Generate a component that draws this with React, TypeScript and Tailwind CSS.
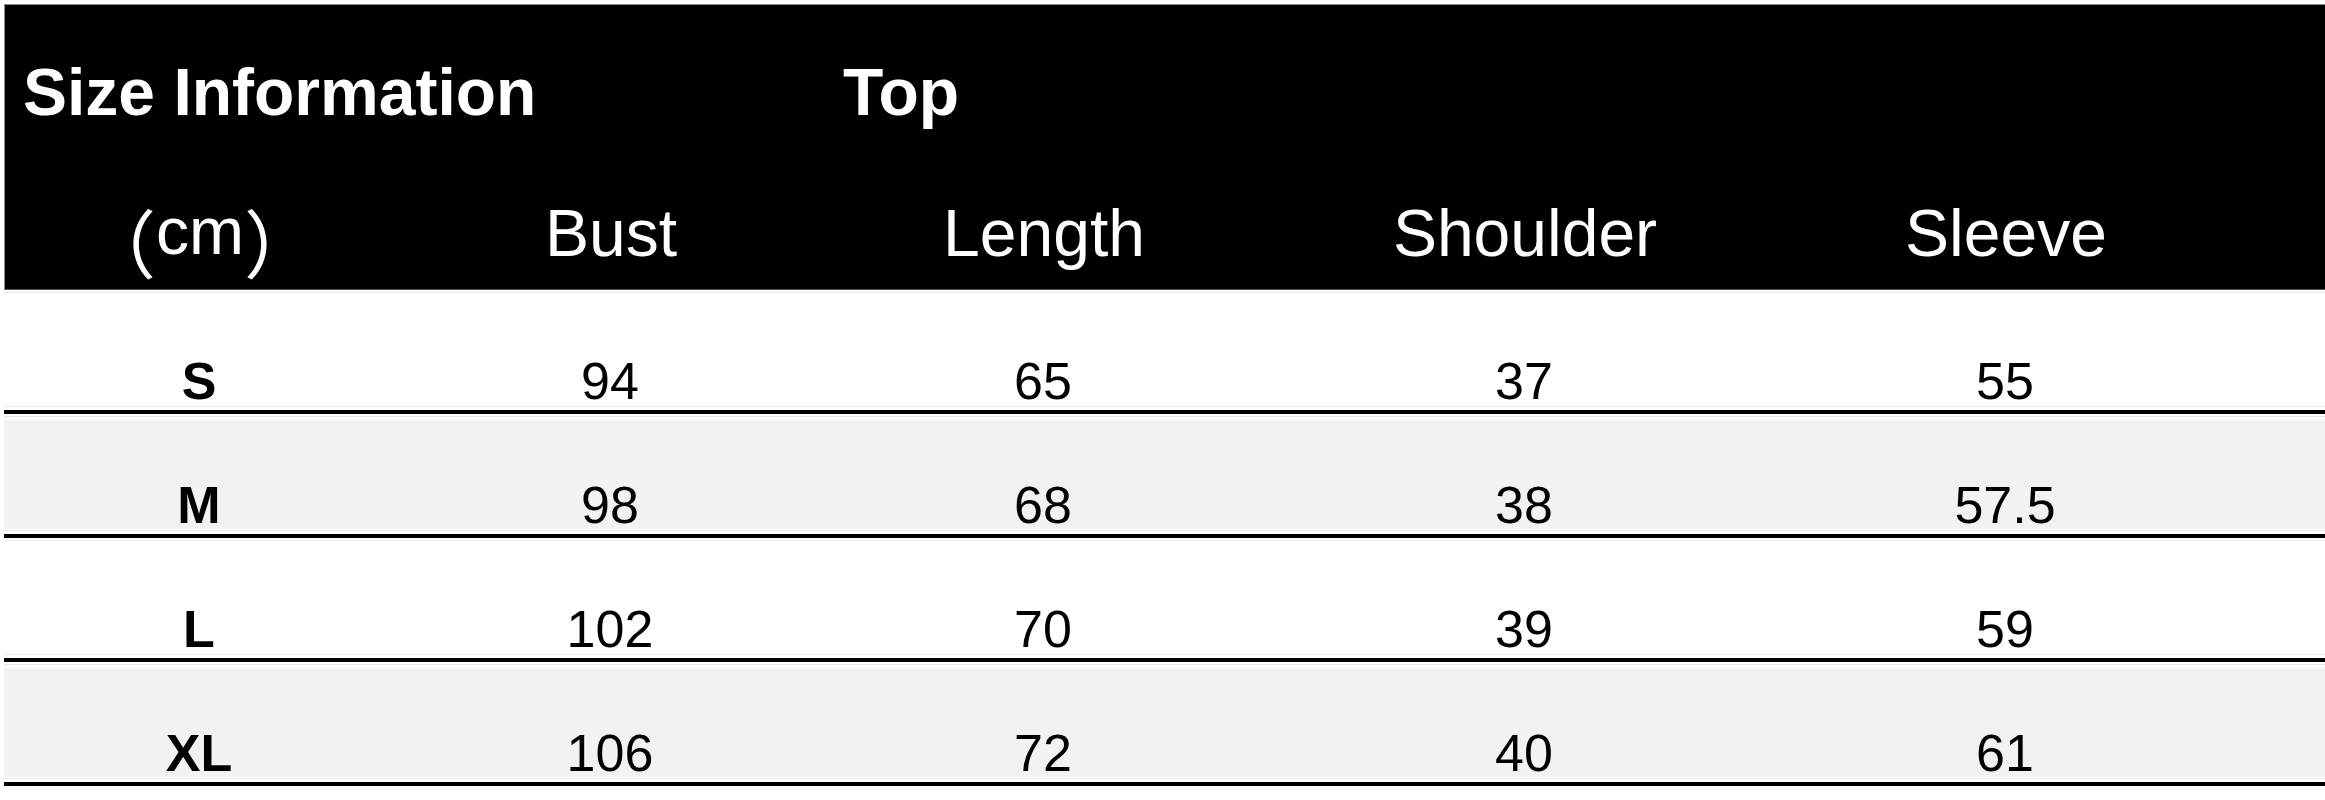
import React from 'react';

const rows = [
  { size: 'S', bust: '94', length: '65', shoulder: '37', sleeve: '55' },
  { size: 'M', bust: '98', length: '68', shoulder: '38', sleeve: '57.5' },
  { size: 'L', bust: '102', length: '70', shoulder: '39', sleeve: '59' },
  { size: 'XL', bust: '106', length: '72', shoulder: '40', sleeve: '61' },
];

const cols = 'grid grid-cols-[390px_432px_434px_528px_434px_1fr]';

const App: React.FC = () => {
  return (
    <div className="min-h-[800px] bg-white pt-[4px] pl-[4px] font-['Liberation_Sans','Noto_Sans_CJK_SC',sans-serif]">
      {/* Header */}
      <div className="bg-black text-white border-t border-l border-[#8a8a8a] border-b border-b-[#5a5a5a]">
        <div className={`${cols} h-[135px] items-end pb-[15px] text-[66px] leading-none font-bold`}>
          <div className="col-span-2 pl-[18px]">Size Information</div>
          <div className="pl-[16px]">Top</div>
        </div>
        <div className={`${cols} h-[149px] items-end pb-[23px] text-[66px] leading-none text-center`}>
          <div>
            <span className="relative top-[18px] inline-block text-[74px] leading-none">（</span>
            cm
            <span className="relative top-[18px] inline-block text-[74px] leading-none">）</span>
          </div>
          <div>Bust</div>
          <div>Length</div>
          <div>Shoulder</div>
          <div>Sleeve</div>
          <div />
        </div>
      </div>

      {/* Rows */}
      {rows.map((row, i) => (
        <div
          key={row.size}
          className={`${cols} h-[124px] items-end pb-[3px] border-b-4 border-black text-[52px] leading-none text-center text-black ${
            i % 2 === 1
              ? 'bg-[#f2f2f2] shadow-[inset_0_2px_0_white,inset_0_3px_0_#e6e6e6,inset_0_6px_0_white,inset_0_-3px_0_white,inset_0_-4px_0_#e6e6e6,inset_0_-5px_0_white]'
              : 'bg-white shadow-[inset_0_2px_0_white,inset_0_3px_0_#ececec,inset_0_-3px_0_white,inset_0_-4px_0_#ececec]'
          }`}
        >
          <div className="font-bold">{row.size}</div>
          <div>{row.bust}</div>
          <div>{row.length}</div>
          <div>{row.shoulder}</div>
          <div>{row.sleeve}</div>
          <div />
        </div>
      ))}
    </div>
  );
};

export default App;
